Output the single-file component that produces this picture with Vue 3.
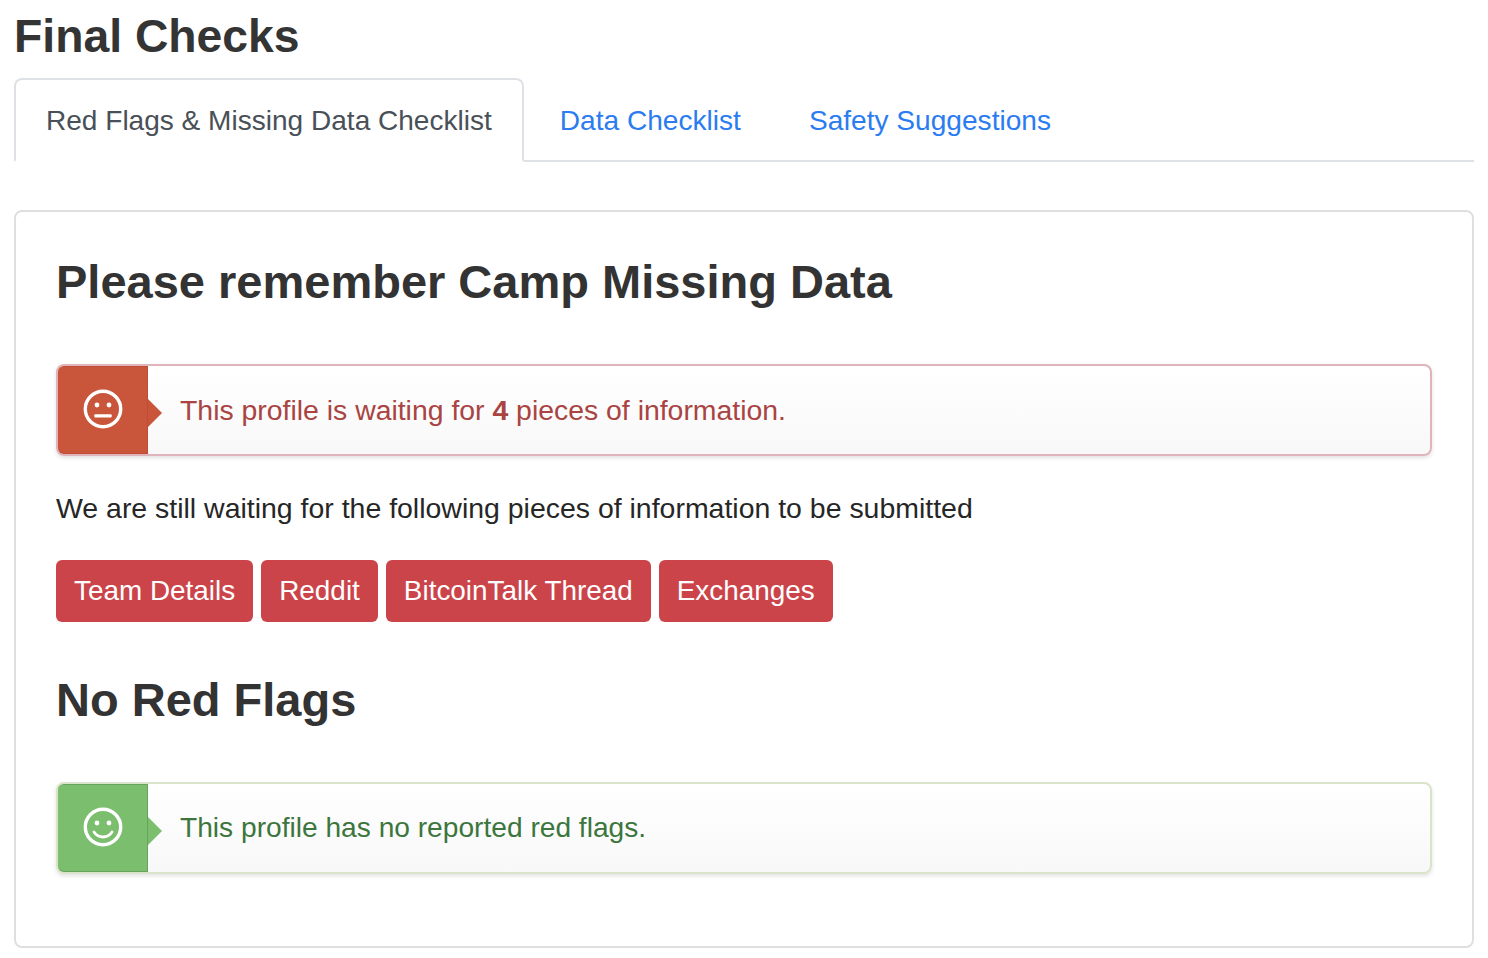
<template>
  <div class="page">
    <h3 class="page-title">Final Checks</h3>

    <ul class="tabs">
      <li v-for="(tab, i) in tabs" :key="tab" class="tab" :class="{ active: i === 0 }">{{ tab }}</li>
    </ul>

    <div class="panel">
      <h2 class="heading">Please remember Camp Missing Data</h2>

      <div class="notice notice-danger">
        <div class="notice-icon">
          <svg viewBox="0 0 40 40" width="40" height="40">
            <circle cx="20" cy="20" r="17.7" fill="none" stroke="#fff" stroke-width="3.4" />
            <circle cx="14" cy="16" r="2.4" fill="#fff" />
            <circle cx="26" cy="16" r="2.4" fill="#fff" />
            <rect x="11.300" y="25.300" width="17.400" height="3.200" rx="1" fill="#fff" />
          </svg>
        </div>
        <div class="notice-text">This profile is waiting for <b>4</b> pieces of information.</div>
      </div>

      <p class="waiting">We are still waiting for the following pieces of information to be submitted</p>

      <div class="missing">
        <span v-for="item in missing" :key="item" class="tag">{{ item }}</span>
      </div>

      <h2 class="heading heading-second">No Red Flags</h2>

      <div class="notice notice-success">
        <div class="notice-icon">
          <svg viewBox="0 0 40 40" width="40" height="40">
            <circle cx="20" cy="20" r="17.7" fill="none" stroke="#fff" stroke-width="3.4" />
            <circle cx="14" cy="16" r="2.4" fill="#fff" />
            <circle cx="26" cy="16" r="2.4" fill="#fff" />
            <path d="M11 25c2.200 3.400 5.400 5 9 5s6.800-1.600 9-5" fill="none" stroke="#fff" stroke-width="2.800" stroke-linecap="round" />
          </svg>
        </div>
        <div class="notice-text">This profile has no reported red flags.</div>
      </div>
    </div>
  </div>
</template>

<script setup>
const tabs = ['Red Flags & Missing Data Checklist', 'Data Checklist', 'Safety Suggestions']
const missing = ['Team Details', 'Reddit', 'BitcoinTalk Thread', 'Exchanges']
</script>

<style scoped>
.page {
  padding: 0 14px;
  font-family: "Liberation Sans", Arial, sans-serif;
  font-size: 28.4px;
  color: #212529;
}

.page-title {
  margin: 0;
  height: 78px;
  padding-top: 8px;
  box-sizing: border-box;
  font-size: 46.300px;
  line-height: 56px;
  font-weight: 700;
  color: #343434;
}

.tabs {
  display: flex;
  margin: 0 0 48px;
  padding: 0;
  list-style: none;
  height: 84px;
  box-sizing: border-box;
  border-bottom: 2px solid #dee2e6;
  font-size: 28.100px;
}

.tab {
  height: 84px;
  box-sizing: border-box;
  padding: 0 32px;
  line-height: 82px;
  color: #2a7cf0;
  border: 2px solid transparent;
  border-radius: 8px 8px 0 0;
}

.tab.active {
  margin-right: 2px;
  color: #495057;
  background: #fff;
  padding: 0 30px;
  font-size: 28.050px;
  border-color: #dee2e6 #dee2e6 #fff;
}

.panel {
  height: 738px;
  box-sizing: border-box;
  padding: 41px 40px 0;
  border: 2px solid #dfdfdf;
  border-radius: 8px;
}

.heading {
  margin: 0 0 53px;
  font-size: 47px;
  line-height: 58px;
  font-weight: 700;
  color: #333;
}

.notice {
  display: flex;
  height: 92px;
  box-sizing: border-box;
  background: linear-gradient(#fff, #f8f8f8);
  border: 2px solid;
  border-radius: 8px;
  box-shadow: 0 2px 4px rgba(0, 0, 0, 0.12);
}

.notice-danger {
  color: #a94442;
  border-color: #e0b4bb;
}

.notice-success {
  color: #3c763d;
  border-color: #d9e5c8;
  font-size: 28.150px;
}

.notice-icon {
  position: relative;
  display: flex;
  align-items: flex-start;
  justify-content: center;
  width: 90px;
  flex: none;
  padding-top: 22px;
  box-sizing: border-box;
  border-radius: 6px 0 0 6px;
}

.notice-danger .notice-icon {
  background: #c9553b;
  border: 1px solid #bf4d35;
  border-left: 0;
}

.notice-success .notice-icon {
  background: #7abe6e;
  border: 1px solid #68a35e;
  border-left: 0;
}

.notice-icon::after {
  content: "";
  position: absolute;
  top: 32px;
  left: calc(100% + 1px);
  border-style: solid;
  border-width: 14px 0 14px 14px;
  border-color: transparent;
}

.notice-danger .notice-icon::after {
  border-left-color: #c9553b;
}

.notice-success .notice-icon::after {
  border-left-color: #7abe6e;
}

.notice-text {
  padding-left: 32px;
  line-height: 88px;
}

.waiting {
  margin: 34px 0 34px;
  line-height: 36px;
  font-size: 28.460px;
  color: #262626;
}

.missing {
  display: flex;
  gap: 8px;
  margin-bottom: 49px;
  font-size: 27.900px;
}

.tag {
  height: 62px;
  padding: 0 18px;
  line-height: 62px;
  color: #fff;
  background: #cb444a;
  border-radius: 6px;
}

.heading-second {
  margin-bottom: 53px;
}
</style>
